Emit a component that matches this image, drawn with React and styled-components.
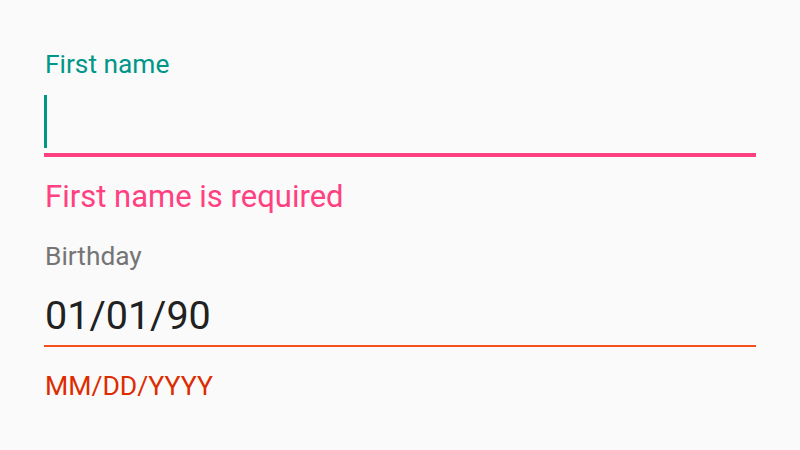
import React from "react";
import styled, { createGlobalStyle } from "styled-components";

const Global = createGlobalStyle`
  html, body { margin: 0; padding: 0; background: #fafafa; }
  body { font-family: Roboto, "Noto Sans", sans-serif; -webkit-font-smoothing: antialiased; }
  #root { width: 800px; height: 450px; }
`;

const Page = styled.div`
  box-sizing: border-box;
  width: 800px;
  height: 450px;
  padding: 49px 44px 0 44px;
  background: #fafafa;
  display: flex;
  flex-direction: column;
`;

const Field = styled.div`
  display: flex;
  flex-direction: column;
  margin-top: ${(p) => p.$gap || 0}px;
`;

const Label = styled.div`
  font-size: 26.3px;
  line-height: 30px;
  color: ${(p) => p.$color};
  padding-left: 1px;
`;

const InputArea = styled.div`
  display: flex;
  align-items: flex-end;
  margin-top: ${(p) => p.$gap}px;
  height: ${(p) => p.$h}px;
`;

const Cursor = styled.div`
  width: 3px;
  height: 53px;
  background: #009688;
`;

const Value = styled.div`
  font-size: 39.5px;
  line-height: 46px;
  color: #212121;
  padding-left: 1px;
`;

const Underline = styled.div`
  height: ${(p) => p.$thick}px;
  background: ${(p) => p.$color};
  margin-top: ${(p) => p.$gap}px;
  width: 712px;
`;

const Helper = styled.div`
  font-size: ${(p) => p.$size}px;
  line-height: ${(p) => p.$lh}px;
  color: ${(p) => p.$color};
  margin-top: ${(p) => p.$gap}px;
  padding-left: 1px;
`;

export default function App() {
  return (
    <>
      <Global />
      <Page>
        <Field>
          <Label $color="#009688">First name</Label>
          <InputArea $gap={16} $h={53}>
            <Cursor />
          </InputArea>
          <Underline $thick={4} $color="#ff4081" $gap={5} />
          <Helper $size={31} $lh={36} $color="#ff4081" $gap={22}>
            First name is required
          </Helper>
        </Field>
        <Field $gap={26}>
          <Label $color="#757575">Birthday</Label>
          <InputArea $gap={22} $h={46}>
            <Value>01/01/90</Value>
          </InputArea>
          <Underline $thick={2} $color="#f4511e" $gap={6} />
          <Helper $size={26.6} $lh={32} $color="#dd2c00" $gap={23}>
            MM/DD/YYYY
          </Helper>
        </Field>
      </Page>
    </>
  );
}
